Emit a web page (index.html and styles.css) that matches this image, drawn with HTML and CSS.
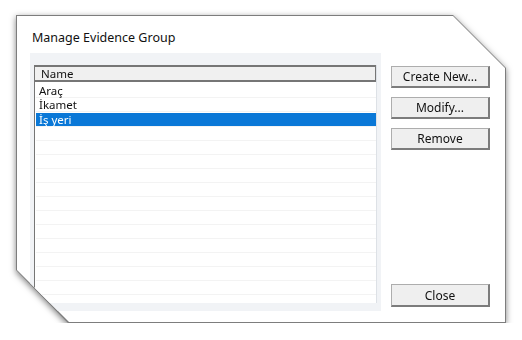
FILE: index.html
```html
<!DOCTYPE html>
<html>

<head>
  <link rel="stylesheet" href="styles.css">
</head>

<body>
  <div class="frame">
    <div class="edge">
      <div class="dialog">
        <div class="title">Manage Evidence Group</div>

        <div class="content">
          <div class="list-panel">
            <div class="list">
              <div class="list-header">Name</div>
              <div class="row">Araç</div>
              <div class="row">İkamet</div>
              <div class="row selected">İş yeri</div>
              <div class="row"></div>
              <div class="row"></div>
              <div class="row"></div>
              <div class="row"></div>
              <div class="row"></div>
              <div class="row"></div>
              <div class="row"></div>
              <div class="row"></div>
              <div class="row"></div>
              <div class="row"></div>
              <div class="row"></div>
              <div class="row"></div>
            </div>
          </div>

          <div class="actions">
            <button class="btn">Create New...</button>
            <button class="btn">Modify...</button>
            <button class="btn">Remove</button>
            <button class="btn close">Close</button>
          </div>
        </div>
      </div>
    </div>
  </div>
</body>

</html>
```

FILE: styles.css
```css
:root {
  --edge-color: #7d7d7d;
  --dialog-bg: #ffffff;
  --panel-bg: #f1f3f6;
  --text-color: #111111;
  --list-border: #767676;
  --header-bg: #f0f0f0;
  --row-line: #f3f3f3;
  --select-bg: #0a78d7;
  --button-bg: #efefef;
  --button-border: #adadad;
  --button-shade: #7c7c7c;
}

body {
  margin: 0;
  padding: 15px 0 0 16px;
  background-color: #ffffff;
  font-family: 'Noto Sans', 'Open Sans', sans-serif;
  color: var(--text-color);
}

/* cut-corner dialog shape */
.frame {
  width: 490px;
  height: 308px;
  filter: drop-shadow(0 2px 3px rgba(0, 0, 0, 0.5));
}

.edge {
  width: 100%;
  height: 100%;
  padding: 1px;
  box-sizing: border-box;
  background-color: var(--edge-color);
  clip-path: polygon(0 0, 437px 0, 490px 53px, 490px 308px, 52px 308px, 0 255px);
}

.dialog {
  width: 100%;
  height: 100%;
  box-sizing: border-box;
  background-color: var(--dialog-bg);
  clip-path: polygon(0 0, 436px 0, 488px 52px, 488px 306px, 52px 306px, 0 254px);
  padding: 13px 0 0 13px;
  display: flex;
  flex-direction: column;
}

.title {
  font-size: 12.5px;
  line-height: 18px;
  margin-left: 2px;
  height: 24px;
}

.content {
  display: flex;
  gap: 10px;
  height: 258px;
}

.list-panel {
  width: 351px;
  box-sizing: border-box;
  padding: 12px 4px 8px 4px;
  background-color: var(--panel-bg);
}

.list {
  height: 100%;
  box-sizing: border-box;
  background-color: #ffffff;
  border-left: 1px solid var(--list-border);
  border-right: 1px solid #dde1e6;
  overflow: hidden;
  padding-left: 1px;
}

.list-header {
  height: 17px;
  box-sizing: border-box;
  border: 2px solid var(--list-border);
  border-left-width: 1px;
  background-color: var(--header-bg);
  font-size: 11.5px;
  line-height: 13px;
  padding-left: 6px;
  margin-left: -2px;
  margin-right: -1px;
}

.row {
  height: 14px;
  box-sizing: border-box;
  border-bottom: 1px solid var(--row-line);
  font-size: 11.5px;
  line-height: 13px;
  padding-left: 3px;
}

.list-header + .row {
  margin-top: 2px;
}

.row.selected {
  background-color: var(--select-bg);
  color: #ffffff;
  margin-top: 1px;
}

.actions {
  display: flex;
  flex-direction: column;
  gap: 9px;
  padding: 13px 0 4px 0;
}

.btn {
  width: 99px;
  height: 22px;
  padding: 0;
  font-family: inherit;
  font-size: 12px;
  color: var(--text-color);
  background-color: var(--button-bg);
  border: 1px solid var(--button-border);
  border-right: 2px solid var(--button-shade);
  border-bottom: 2px solid var(--button-shade);
}

.close {
  margin-top: auto;
  height: 23px;
}
```
